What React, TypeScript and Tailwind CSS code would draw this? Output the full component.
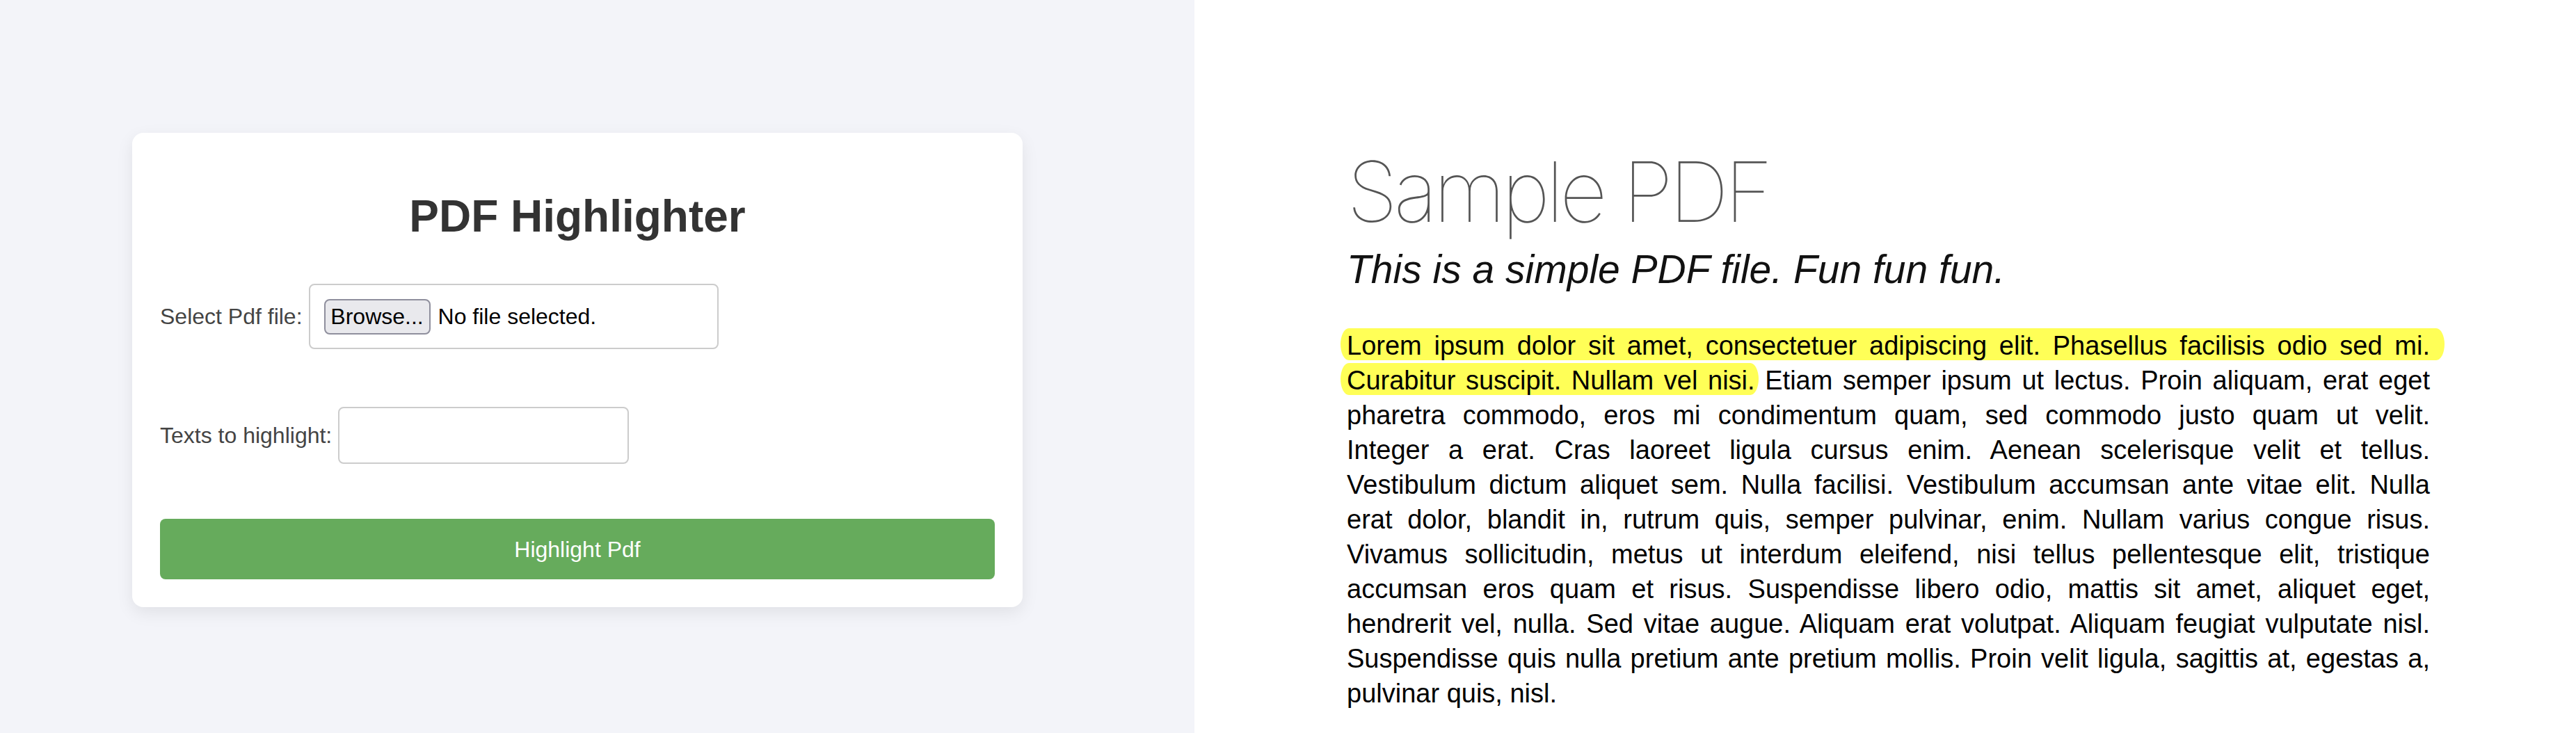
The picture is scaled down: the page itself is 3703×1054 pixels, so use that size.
import React from 'react'

const lines: string[] = [
  'pharetra commodo, eros mi condimentum quam, sed commodo justo quam ut velit.',
  'Integer a erat. Cras laoreet ligula cursus enim. Aenean scelerisque velit et tellus.',
  'Vestibulum dictum aliquet sem. Nulla facilisi. Vestibulum accumsan ante vitae elit. Nulla',
  'erat dolor, blandit in, rutrum quis, semper pulvinar, enim. Nullam varius congue risus.',
  'Vivamus sollicitudin, metus ut interdum eleifend, nisi tellus pellentesque elit, tristique',
  'accumsan eros quam et risus. Suspendisse libero odio, mattis sit amet, aliquet eget,',
  'hendrerit vel, nulla. Sed vitae augue. Aliquam erat volutpat. Aliquam feugiat vulputate nisl.',
  'Suspendisse quis nulla pretium ante pretium mollis. Proin velit ligula, sagittis at, egestas a,'
]

function Form() {
  return (
    <div className="w-[1280px] h-[682px] bg-white rounded-[16px] shadow-[0_8px_24px_rgba(0,0,0,0.08)] px-[40px] pt-[40px] font-['Liberation_Sans',Arial,sans-serif]">
      <h1 className="mt-[43px] text-center text-[64px] leading-[74px] font-bold text-[#333]">
        PDF Highlighter
      </h1>

      <div className="mt-[60px] flex items-center">
        <label className="text-[32px] text-[#444] leading-[37px]">Select Pdf file:</label>
        <div className="ml-[9px] w-[589px] h-[94px] border-2 border-[#ccc] rounded-[8px] p-[20px] flex items-center">
          <span className="w-[153px] h-[51px] flex items-center justify-center bg-[#e9e9ed] border-2 border-[#8f8f9d] rounded-[8px] text-[32px] text-black">
            Browse...
          </span>
          <span className="ml-[11px] text-[32px] text-black">No file selected.</span>
        </div>
      </div>

      <div className="mt-[83px] flex items-center">
        <label className="text-[32px] text-[#444] leading-[37px]">Texts to highlight:</label>
        <input
          type="text"
          className="ml-[9px] w-[418px] h-[82px] border-2 border-[#ccc] rounded-[8px] px-[20px] text-[32px] outline-none"
        />
      </div>

      <button className="mt-[79px] w-full h-[87px] rounded-[8px] bg-[#66ab5c] text-white text-[32px]">
        Highlight Pdf
      </button>
    </div>
  )
}

function Mark({ children, right }: { children: React.ReactNode; right: string }) {
  return (
    <span
      className={`bg-[#ffff57] pt-[4px] -ml-[9px] pl-[9px] rounded-[12px/23px] ${right}`}
    >
      {children}
    </span>
  )
}

function Pdf() {
  const just = 'h-[50px] leading-[50px] text-justify [text-align-last:justify]'
  return (
    <div className="pl-[219px] pt-[216px] font-['Liberation_Sans',Arial,sans-serif]">
      <div className="font-['Inter',sans-serif] font-thin text-[120px] leading-[120px] tracking-[-0.05em] text-[#555]">
        Sample PDF
      </div>
      <div className="mt-[18px] italic text-[57px] leading-[66px] text-[#111]">
        This is a simple PDF file. Fun fun fun.
      </div>
      <div className="mt-[52px] w-[1557px] text-[38px] text-black">
        <div className={just}>
          <Mark right="-mr-[21px] pr-[21px]">
            Lorem ipsum dolor sit amet, consectetuer adipiscing elit. Phasellus facilisis odio sed mi.
          </Mark>
        </div>
        <div className={just}>
          <Mark right="-mr-[5px] pr-[5px]">Curabitur suscipit. Nullam vel nisi.</Mark> Etiam semper
          ipsum ut lectus. Proin aliquam, erat eget
        </div>
        {lines.map((l) => (
          <div key={l} className={just}>
            {l}
          </div>
        ))}
        <div className="h-[50px] leading-[50px]">pulvinar quis, nisl.</div>
      </div>
    </div>
  )
}

export default function App() {
  return (
    <div className="flex w-[3703px] h-[1054px] overflow-hidden">
      <div className="w-[1717px] shrink-0 bg-[#f3f4f9] pl-[190px] pt-[191px]">
        <Form />
      </div>
      <div className="flex-1 bg-white">
        <Pdf />
      </div>
    </div>
  )
}
